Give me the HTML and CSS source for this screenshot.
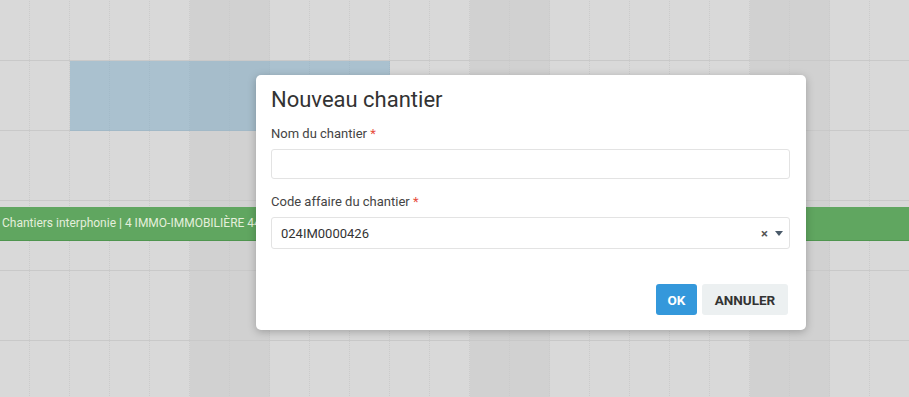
FILE: index.html
```html
<!DOCTYPE html>
<html lang="fr">
<head>
    <meta charset="UTF-8">
    <meta name="viewport" content="width=device-width, initial-scale=1.0">
    <title>Planning chantiers</title>
    <link rel="stylesheet" href="styles.css">
</head>
<body>
    <div id="scheduler">
        <div class="grid" id="grid"></div>
        <div class="selection"></div>
        <div class="event">Chantiers interphonie | 4 IMMO-IMMOBILIÈRE 44</div>
    </div>

    <div class="modal">
        <h2 class="modal-title">Nouveau chantier</h2>
        <div class="field">
            <label class="field-label">Nom du chantier <span class="required">*</span></label>
            <input class="field-input" type="text">
        </div>
        <div class="field">
            <label class="field-label">Code affaire du chantier <span class="required">*</span></label>
            <div class="field-input select">
                <span class="select-value">024IM0000426</span>
                <span class="select-clear">×</span>
                <span class="select-arrow"></span>
            </div>
        </div>
        <div class="modal-actions">
            <button class="btn btn-ok">OK</button>
            <button class="btn btn-cancel">ANNULER</button>
        </div>
    </div>

    <script>
        // Build the week grid: 6 rows, 24 day columns
        const grid = document.getElementById('grid');
        for (let r = 0; r < 6; r++) {
            const row = document.createElement('div');
            row.className = 'grid-row';
            for (let c = 0; c < 24; c++) {
                const cell = document.createElement('div');
                cell.className = 'grid-cell';
                if (c % 7 === 5 || c % 7 === 6) cell.classList.add('weekend');
                row.appendChild(cell);
            }
            grid.appendChild(row);
        }
    </script>
</body>
</html>
```

FILE: styles.css
```css
body {
    margin: 0;
    font-family: Roboto, "Liberation Sans", sans-serif;
    background: #d9d9d9;
    overflow: hidden;
}
#scheduler {
    position: relative;
    height: 397px;
    overflow: hidden;
}
.grid {
    margin-top: -9px;
    margin-left: -10px;
}
.grid-row {
    display: flex;
    height: 69px;
    border-bottom: 1px solid #c9c9c9;
}
.grid-cell {
    flex: 0 0 40px;
    box-sizing: border-box;
    border-right: 1px dotted #cbcbcb;
    background: #d9d9d9;
}
.grid-cell.weekend {
    background: #d1d1d1;
}
.selection {
    position: absolute;
    left: 70px;
    top: 61px;
    width: 320px;
    height: 70px;
    background: rgba(123, 169, 197, 0.5);
}
.event {
    position: absolute;
    left: 0;
    right: 0;
    top: 207px;
    height: 33px;
    padding-left: 2px;
    background: #60a660;
    border-bottom: 1px solid #4f954f;
    color: #e4efdc;
    font-size: 12px;
    line-height: 32px;
    white-space: nowrap;
}
.modal {
    position: absolute;
    left: 256px;
    top: 75px;
    width: 550px;
    height: 255px;
    box-sizing: border-box;
    padding: 12px 16px 15px 15px;
    background: #fff;
    border-radius: 5px;
    box-shadow: 0 2px 8px rgba(0, 0, 0, 0.25);
    display: flex;
    flex-direction: column;
}
.modal-title {
    margin: 0 0 13px;
    font-size: 22px;
    font-weight: 400;
    line-height: 26px;
    color: #333;
}
.field {
    display: flex;
    flex-direction: column;
    gap: 7px;
    margin-bottom: 15px;
}
.field-label {
    font-size: 13px;
    line-height: 16px;
    color: #444;
}
.required {
    color: #e74c3c;
}
.field-input {
    box-sizing: border-box;
    height: 30px;
    border: 1px solid #e3e3e3;
    border-radius: 3px;
    font-family: inherit;
    font-size: 13px;
    color: #333;
    padding: 0 6px 0 9px;
}
.select {
    display: flex;
    align-items: center;
    height: 32px;
}
.select-value {
    flex: 1;
}
.select-clear {
    font-size: 13px;
    font-weight: bold;
    color: #555;
    margin-right: 7px;
}
.select-arrow {
    width: 0;
    height: 0;
    border-left: 4px solid transparent;
    border-right: 4px solid transparent;
    border-top: 5px solid #4a5a6a;
}
.modal-actions {
    margin-top: auto;
    display: flex;
    justify-content: flex-end;
    gap: 5px;
    padding-right: 2px;
}
.btn {
    height: 31px;
    border: none;
    border-radius: 3px;
    font-family: inherit;
    font-size: 13.5px;
    font-weight: bold;
    cursor: pointer;
}
.btn-ok {
    width: 41px;
    background: #3498db;
    color: #fff;
}
.btn-cancel {
    width: 86px;
    background: #ecf0f1;
    color: #333;
}
```
